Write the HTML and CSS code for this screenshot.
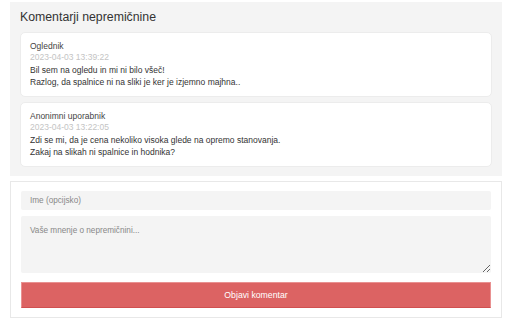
FILE: index.html
```html
<!DOCTYPE html>
<html lang="sl">
<head>
<meta charset="utf-8">
<title>Komentarji nepremičnine</title>
<link rel="stylesheet" href="styles.css">
</head>
<body>
<section class="comments">
  <h2 class="comments-title">Komentarji nepremičnine</h2>
  <div class="card">
    <div class="author">Oglednik</div>
    <div class="date">2023-04-03 13:39:22</div>
    <p class="text">Bil sem na ogledu in mi ni bilo všeč!<br>Razlog, da spalnice ni na sliki je ker je izjemno majhna..</p>
  </div>
  <div class="card">
    <div class="author">Anonimni uporabnik</div>
    <div class="date">2023-04-03 13:22:05</div>
    <p class="text">Zdi se mi, da je cena nekoliko visoka glede na opremo stanovanja.<br>Zakaj na slikah ni spalnice in hodnika?</p>
  </div>
</section>
<form class="comment-form">
  <input class="field" type="text" placeholder="Ime (opcijsko)">
  <textarea class="field area" placeholder="Vaše mnenje o nepremičnini..."></textarea>
  <button class="submit" type="button">Objavi komentar</button>
</form>
</body>
</html>
```
FILE: styles.css
```css
* { box-sizing: border-box; }
html, body { margin: 0; padding: 0; background: #fff; }
body {
  padding: 2px 10px 0 10px;
  font-family: "Liberation Sans", Arial, sans-serif;
  color: #333;
}
.comments {
  background: #f4f4f4;
  padding: 7px 10px 9px 10px;
  display: flex;
  flex-direction: column;
  gap: 5px;
}
.comments-title {
  margin: 0 0 2px 0;
  font-size: 12.3px;
  font-weight: normal;
  line-height: 16px;
  color: #333;
}
.card {
  background: #fff;
  border: 1px solid #ececec;
  border-radius: 5px;
  padding: 8px 9px 8px 9px;
  font-size: 8.5px;
}
.author {
  color: #444;
  line-height: 11px;
}
.date {
  color: #c4c4c4;
  line-height: 11px;
  margin-bottom: 1px;
}
.text {
  margin: 0;
  line-height: 12px;
  color: #333;
}
.comment-form {
  margin-top: 5px;
  border: 1px solid #e8e8e8;
  padding: 9px 10px 9px 10px;
  display: flex;
  flex-direction: column;
  gap: 6px;
}
.field {
  font-family: "Liberation Sans", Arial, sans-serif;
  font-size: 8.2px;
  background: #f4f4f4;
  border: none;
  border-radius: 2px;
  padding: 0 9px;
  height: 19px;
  color: #333;
  outline: none;
}
.field::placeholder { color: #888; }
.area {
  height: 57px;
  padding: 10px 9px;
  resize: vertical;
}
.submit {
  margin-top: 3px;
  height: 26px;
  background: #dc6363;
  border: 1px solid #e99191;
  border-bottom-color: #d05050;
  color: #fff;
  font-family: "Liberation Sans", Arial, sans-serif;
  font-size: 8.7px;
  padding: 0;
}
```
